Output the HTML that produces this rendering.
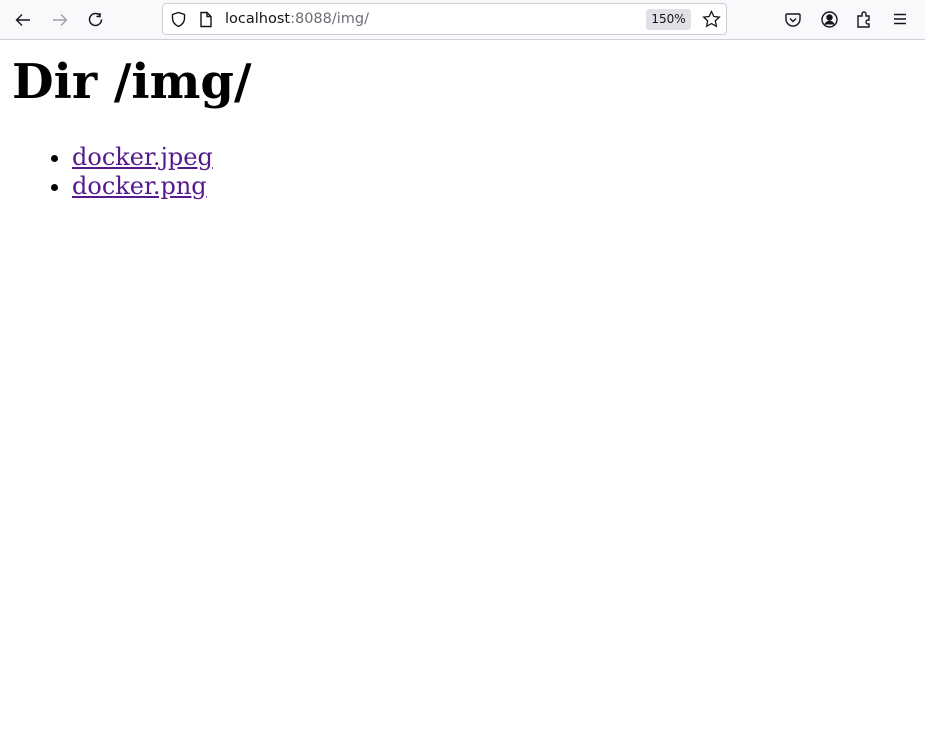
<!DOCTYPE html>
<html><head><meta charset="utf-8"><style>
*{margin:0;padding:0;box-sizing:border-box}
body{width:925px;height:732px;background:#fff;overflow:hidden;position:relative;font-family:"DejaVu Serif",serif}
.bar{position:absolute;left:0;top:0;width:925px;height:40px;background:#f9f9fb;border-bottom:1px solid #cfcfd8}
.url{position:absolute;left:162px;top:3px;width:565px;height:32px;background:#fff;border:1px solid #cfcfd8;border-radius:4px}
.u{position:absolute;left:62px;top:7px;font:14.5px "DejaVu Sans","Liberation Sans",sans-serif;color:#15141a}
.u span{color:#6d6d75}
.zoom{position:absolute;left:483px;top:5px;width:45px;height:21px;background:#e0e0e6;border-radius:3px;font:12px "DejaVu Sans",sans-serif;text-align:center;line-height:21px;color:#15141a}
svg{position:absolute}
h1{position:absolute;left:12px;top:54px;font:bold 48px/56px "DejaVu Serif",serif;color:#000}
ul{position:absolute;left:72px;top:143px;font:24px/29px "DejaVu Serif",serif}
a{color:#551a8b}
</style></head><body>
<div class="bar">
<svg style="left:14px;top:11px" width="18" height="18" viewBox="0 0 18 18" fill="none" stroke="#15141a" stroke-width="1.4"><path d="M16 9H3M8 3.5L2.5 9 8 14.5"/></svg>
<svg style="left:51px;top:11px" width="18" height="18" viewBox="0 0 18 18" fill="none" stroke="#a0a0a6" stroke-width="1.4"><path d="M2 9h13M10 3.5L15.5 9 10 14.5"/></svg>
<svg style="left:87px;top:11px" width="18" height="18" viewBox="0 0 18 18" fill="none" stroke="#15141a" stroke-width="1.5"><path d="M14.5 8.5A6 6 0 1 1 12.5 4"/><path d="M13 2v3.5H9.5"/></svg>
<div class="url">
<svg style="left:7px;top:7px" width="17" height="17" viewBox="0 0 17 17" fill="none" stroke="#15141a" stroke-width="1.4"><path d="M8.5 1.5L2.5 3.5v4c0 4 3 6.5 6 8 3-1.5 6-4 6-8v-4z"/></svg>
<svg style="left:36px;top:7px" width="14" height="17" viewBox="0 0 14 17" fill="none" stroke="#15141a" stroke-width="1.4"><path d="M2 1.5h6l4 4v10H2z M8 1.5v4h4"/></svg>
<div class="u">localhost<span>:8088/img/</span></div>
<div class="zoom">150%</div>
<svg style="left:539px;top:6px" width="19" height="19" viewBox="0 0 19 19" fill="none" stroke="#15141a" stroke-width="1.3"><path d="M9.5 1.5l2.4 5 5.4.6-4 3.8 1.1 5.4-4.9-2.7-4.9 2.7 1.1-5.4-4-3.8 5.4-.6z"/></svg>
</div>
<svg style="left:784px;top:11px" width="18" height="18" viewBox="0 0 18 18" fill="none" stroke="#15141a" stroke-width="1.4"><path d="M3 3h12a1 1 0 0 1 1 1v4a7 7 0 0 1-14 0V4a1 1 0 0 1 1-1z"/><path d="M6 7.5l3 3 3-3"/></svg>
<svg style="left:820px;top:10px" width="19" height="19" viewBox="0 0 19 19" fill="none" stroke="#15141a" stroke-width="1.4"><circle cx="9.5" cy="9.5" r="7.5"/><circle cx="9.5" cy="7.5" r="2.5" fill="#15141a"/><path d="M5 14.5c1-2 2.5-3 4.5-3s3.5 1 4.5 3" fill="#15141a"/></svg>
<svg style="left:856px;top:10px" width="18" height="19" viewBox="0 0 18 19" fill="none" stroke="#15141a" stroke-width="1.4"><path d="M2 17V6h4V4a2 2 0 0 1 4 0v2h3v4h-1a2 2 0 0 0 0 4h1v3z"/></svg>
<svg style="left:892px;top:11px" width="16" height="16" viewBox="0 0 16 16" fill="none" stroke="#15141a" stroke-width="1.4"><path d="M2 3.5h12M2 8h12M2 12.5h12"/></svg>
</div>
<h1>Dir /img/</h1>
<ul><li><a href="#">docker.jpeg</a></li><li><a href="#">docker.png</a></li></ul>
</body></html>
